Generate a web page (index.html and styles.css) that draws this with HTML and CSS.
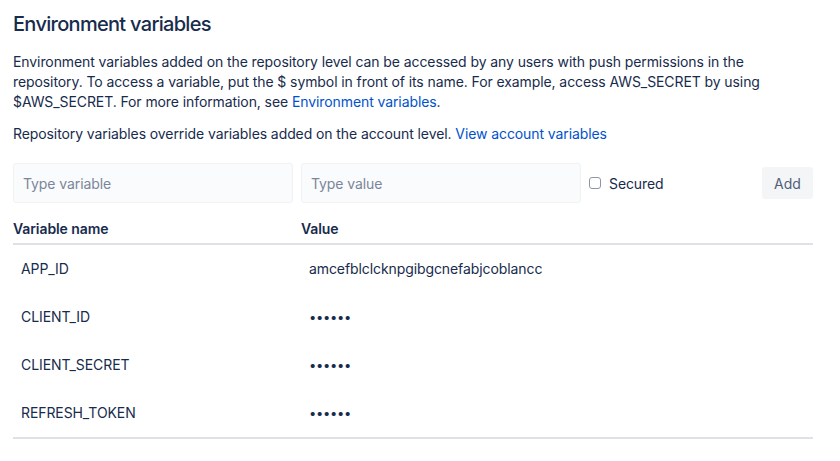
FILE: index.html
```html
<!DOCTYPE html>
<html>
<head>
<meta charset="utf-8">
<link rel="stylesheet" href="styles.css">
</head>
<body>
<div class="page">
  <h3 class="title">Environment variables</h3>
  <p class="text">Environment variables added on the repository level can be accessed by any users with push permissions in the repository. To access a variable, put the $ symbol in front of its name. For example, access AWS_SECRET by using $AWS_SECRET. For more information, see <a class="link" href="#">Environment variables</a>.</p>
  <p class="text">Repository variables override variables added on the account level. <a class="link" href="#">View account variables</a></p>
  <div class="form">
    <input class="field" type="text" placeholder="Type variable">
    <input class="field" type="text" placeholder="Type value">
    <label class="secured"><span class="box"></span>Secured</label>
    <button class="add">Add</button>
  </div>
  <table class="vars">
    <thead>
      <tr><th class="c1">Variable name</th><th>Value</th></tr>
    </thead>
    <tbody>
      <tr><td>APP_ID</td><td>amcefblclcknpgibgcnefabjcoblancc</td></tr>
      <tr><td>CLIENT_ID</td><td class="dots">••••••</td></tr>
      <tr><td>CLIENT_SECRET</td><td class="dots">••••••</td></tr>
      <tr><td>REFRESH_TOKEN</td><td class="dots">••••••</td></tr>
    </tbody>
  </table>
</div>
</body>
</html>
```
FILE: styles.css
```css
* { box-sizing: border-box; }
body {
  margin: 0;
  background: #fff;
  font-family: Inter, "Noto Sans", sans-serif;
  color: #172B4D;
}
.page {
  width: 826px;
  padding: 10px 13px 0 13px;
}
.title {
  margin: 0;
  font-size: 20px;
  line-height: 28px;
  font-weight: 500;
  letter-spacing: -0.7px;
}
.text {
  margin: 14px 0 0 0;
  font-size: 14px;
  line-height: 20px;
  letter-spacing: -0.09px;
}
.text + .text { margin-top: 12px; }
.link { color: #0052CC; text-decoration: none; }
.form {
  display: flex;
  align-items: center;
  margin-top: 19px;
}
.field {
  width: 280px;
  height: 40px;
  margin-right: 8px;
  border: 1px solid #F1F2F4;
  border-radius: 3px;
  background: #FAFBFC;
  padding: 0 9px;
  font-family: inherit;
  font-size: 14px;
  letter-spacing: -0.09px;
  color: #172B4D;
}
.field::placeholder { color: #7A869A; }
.secured {
  display: flex;
  align-items: center;
  font-size: 14px;
  letter-spacing: -0.09px;
  margin-left: 0;
}
.box {
  width: 12px;
  height: 12px;
  border: 1px solid #8E96A3;
  border-radius: 3px;
  margin-right: 8px;
}
.add {
  margin-left: auto;
  height: 32px;
  width: 51px;
  border: none;
  border-radius: 3px;
  background: #F4F5F7;
  color: #505F79;
  font-family: inherit;
  font-size: 14px;
}
.vars {
  width: 800px;
  margin-top: 16px;
  border-collapse: collapse;
  font-size: 14px;
  letter-spacing: -0.09px;
  border-bottom: 2px solid #DFE1E6;
}
.vars th {
  text-align: left;
  font-weight: 600;
  padding: 0 0 4px 0;
  line-height: 20px;
  border-bottom: 2px solid #DFE1E6;
}
.vars th.c1 { width: 288px; }
.vars td {
  padding: 14px 8px;
  line-height: 20px;
  height: 48px;
}
.vars tbody tr { height: 48px; }
.dots { font-size: 13px; letter-spacing: -0.3px; }
```
